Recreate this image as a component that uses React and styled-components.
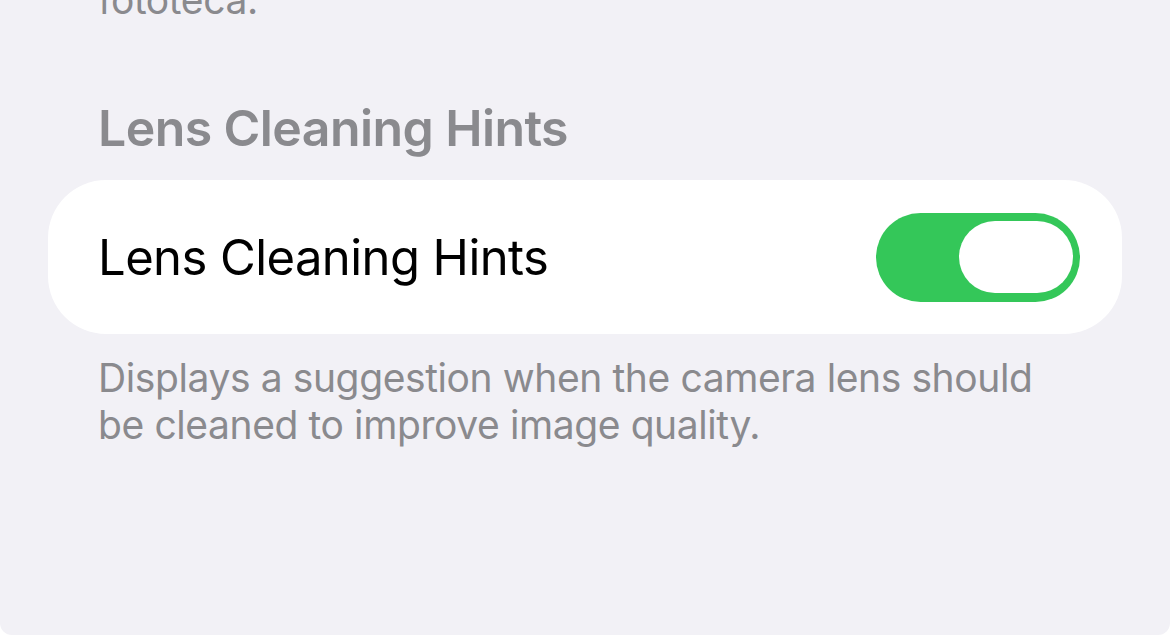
import React from "react";
import styled, { createGlobalStyle } from "styled-components";

const Global = createGlobalStyle`
  html, body { margin: 0; padding: 0; background: #ffffff; }
  body { font-family: "Inter", "Liberation Sans", sans-serif; -webkit-font-smoothing: antialiased; }
`;

const Screen = styled.div`
  width: 1170px;
  height: 635px;
  background: #f2f1f6;
  overflow: hidden;
  border-radius: 0 0 12px 12px;
  display: flex;
  flex-direction: column;
`;

const Footnote = styled.p`
  margin: ${(p) => p.$mt || 0}px 0 0;
  padding: 0 98px;
  font-size: 39px;
  line-height: 47px;
  letter-spacing: -0.4px;
  color: #8a8a8e;
  font-weight: 400;
`;

const SectionHeader = styled.h2`
  margin: 74px 0 0;
  padding: 0 98px;
  font-size: 50px;
  line-height: 62px;
  font-weight: 600;
  letter-spacing: -0.58px;
  color: #8a8a8e;
`;

const Card = styled.div`
  margin: 21px 48px 0;
  height: 154px;
  background: #ffffff;
  border-radius: 58px;
  display: flex;
  align-items: center;
  justify-content: space-between;
  padding: 0 42px 0 50px;
`;

const Label = styled.span`
  font-size: 49px;
  color: #000000;
  letter-spacing: -0.58px;
`;

const Switch = styled.div`
  width: 204px;
  height: 89px;
  border-radius: 45px;
  background: ${(p) => (p.$on ? "#34c759" : "#e9e9ea")};
  display: flex;
  align-items: center;
  justify-content: ${(p) => (p.$on ? "flex-end" : "flex-start")};
  padding: 0 7px;
  box-sizing: border-box;
`;

const Thumb = styled.div`
  width: 114px;
  height: 72px;
  border-radius: 36px;
  background: #ffffff;
`;

export default function App() {
  return (
    <>
      <Global />
      <Screen>
        <Footnote $mt={-24}>fototeca.</Footnote>
        <SectionHeader>Lens Cleaning Hints</SectionHeader>
        <Card>
          <Label>Lens Cleaning Hints</Label>
          <Switch $on>
            <Thumb />
          </Switch>
        </Card>
        <Footnote $mt={20}>
          Displays a suggestion when the camera lens should
          <br />
          be cleaned to improve image quality.
        </Footnote>
      </Screen>
    </>
  );
}
